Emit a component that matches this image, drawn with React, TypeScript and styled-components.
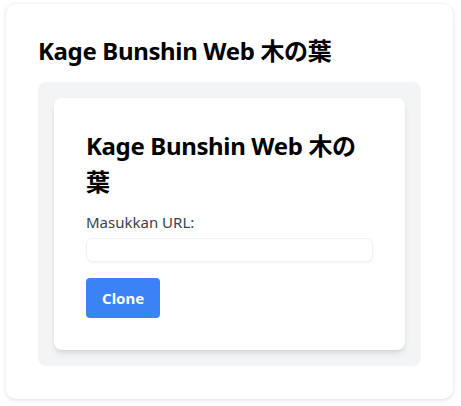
import React from "react";
import styled, { createGlobalStyle } from "styled-components";

const GlobalStyle = createGlobalStyle`
  html, body { margin: 0; padding: 0; background: #ffffff; }
  * { box-sizing: border-box; }
`;

const Page = styled.div`
  padding: 4px 8px 8px 6px;
  font-family: "Noto Sans", "Noto Sans CJK JP", sans-serif;
`;

const Shell = styled.main`
  background: #ffffff;
  border-radius: 10px;
  box-shadow: 0 0 4px rgba(0, 0, 0, 0.07), 0 2px 5px rgba(0, 0, 0, 0.07);
  padding: 31px 32px 33px 32px;
`;

const Title = styled.h1`
  margin: 0 0 15px 0;
  font-size: 24px;
  line-height: 32px;
  font-weight: 700;
  color: #000000;
  letter-spacing: -0.35px;
  white-space: nowrap;
`;

const Panel = styled.section`
  background: #f3f4f6;
  border-radius: 8px;
  padding: 16px;
`;

const Card = styled.div`
  background: #ffffff;
  border-radius: 8px;
  box-shadow: 0 4px 6px -1px rgba(0, 0, 0, 0.1), 0 2px 4px -2px rgba(0, 0, 0, 0.1);
  padding: 30px 32px 32px 32px;
  display: flex;
  flex-direction: column;
  align-items: flex-start;
`;

const Heading = styled.h2`
  margin: 0 0 11px 0;
  font-size: 24px;
  line-height: 36px;
  font-weight: 700;
  color: #000000;
  letter-spacing: -0.35px;
`;

const Label = styled.label`
  display: block;
  font-size: 15px;
  line-height: 22px;
  color: #374151;
`;

const Input = styled.input`
  margin-top: 5px;
  width: 100%;
  height: 24px;
  border: 1px solid #f1f2f4;
  border-radius: 6px;
  box-shadow: 0 1px 2px rgba(0, 0, 0, 0.05);
  background: #ffffff;
  padding: 0 8px;
  font-family: inherit;
  font-size: 14px;
  outline: none;
`;

const Button = styled.button`
  margin-top: 16px;
  height: 40px;
  padding: 0 16px;
  border: none;
  border-radius: 4px;
  background: #3b82f6;
  color: #ffffff;
  font-family: "Noto Sans", sans-serif;
  font-weight: 700;
  font-size: 15px;
  cursor: pointer;
`;

export default function App() {
  return (
    <>
      <GlobalStyle />
      <Page>
        <Shell>
          <Title>Kage Bunshin Web 木の葉</Title>
          <Panel>
            <Card>
              <Heading>Kage Bunshin Web 木の葉</Heading>
              <Label htmlFor="url">Masukkan URL:</Label>
              <Input id="url" type="text" />
              <Button type="button">Clone</Button>
            </Card>
          </Panel>
        </Shell>
      </Page>
    </>
  );
}
